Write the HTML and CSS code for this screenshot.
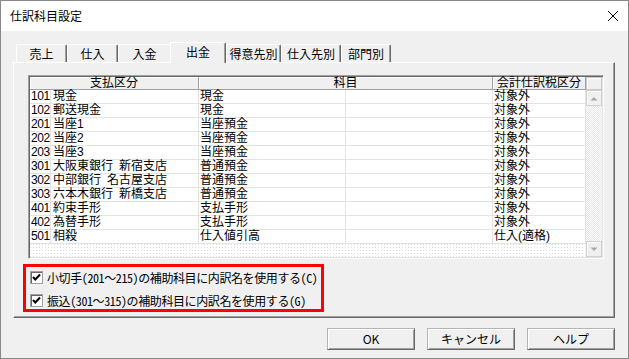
FILE: index.html
```html
<!DOCTYPE html>
<html lang="ja">
<head>
<meta charset="utf-8">
<title>仕訳科目設定</title>
<link rel="stylesheet" href="styles.css">
</head>
<body>
<div class="window">
  <div class="titlebar">
    <span class="title">仕訳科目設定</span>
    <svg class="close" width="10" height="10" viewBox="0 0 10 10"><path d="M0 0L10 10M10 0L0 10" stroke="#000" stroke-width="1" fill="none"/></svg>
  </div>
  <div class="content">
    <div class="tabs">
      <div class="tab tab-a">売上</div>
      <div class="tab tab-b">仕入</div>
      <div class="tab tab-c pre">入金</div>
      <div class="tab tab-d active">出金</div>
      <div class="tab tab-e">得意先別</div>
      <div class="tab tab-f">仕入先別</div>
      <div class="tab tab-g">部門別</div>
    </div>
    <div class="panel">
      <div class="grid">
        <div class="ghead">
          <div class="hc hc-a">支払区分</div>
          <div class="hc hc-b">科目</div>
          <div class="hc hc-c">会計仕訳税区分</div>
          <div class="hc hc-corner"></div>
        </div>
        <div class="gbody">
          <div class="rows">
            <div class="row"><span class="cell code">101</span><span class="cell name">現金</span><span class="cell subj">現金</span><span class="cell blank"></span><span class="cell tax">対象外</span></div>
            <div class="row"><span class="cell code">102</span><span class="cell name">郵送現金</span><span class="cell subj">現金</span><span class="cell blank"></span><span class="cell tax">対象外</span></div>
            <div class="row"><span class="cell code">201</span><span class="cell name">当座1</span><span class="cell subj">当座預金</span><span class="cell blank"></span><span class="cell tax">対象外</span></div>
            <div class="row"><span class="cell code">202</span><span class="cell name">当座2</span><span class="cell subj">当座預金</span><span class="cell blank"></span><span class="cell tax">対象外</span></div>
            <div class="row"><span class="cell code">203</span><span class="cell name">当座3</span><span class="cell subj">当座預金</span><span class="cell blank"></span><span class="cell tax">対象外</span></div>
            <div class="row"><span class="cell code">301</span><span class="cell name">大阪東銀行&ensp;新宿支店</span><span class="cell subj">普通預金</span><span class="cell blank"></span><span class="cell tax">対象外</span></div>
            <div class="row"><span class="cell code">302</span><span class="cell name">中部銀行&ensp;名古屋支店</span><span class="cell subj">普通預金</span><span class="cell blank"></span><span class="cell tax">対象外</span></div>
            <div class="row"><span class="cell code">303</span><span class="cell name">六本木銀行&ensp;新橋支店</span><span class="cell subj">普通預金</span><span class="cell blank"></span><span class="cell tax">対象外</span></div>
            <div class="row"><span class="cell code">401</span><span class="cell name">約束手形</span><span class="cell subj">支払手形</span><span class="cell blank"></span><span class="cell tax">対象外</span></div>
            <div class="row"><span class="cell code">402</span><span class="cell name">為替手形</span><span class="cell subj">支払手形</span><span class="cell blank"></span><span class="cell tax">対象外</span></div>
            <div class="row"><span class="cell code">501</span><span class="cell name">相殺</span><span class="cell subj">仕入値引高</span><span class="cell blank"></span><span class="cell tax">仕入(適格)</span></div>
            <div class="filler"></div>
          </div>
          <div class="vscroll">
            <div class="sbtn"><svg width="8" height="5" viewBox="0 0 8 5"><polygon points="0.5,4.5 4,1 7.5,4.5" fill="#a8a8a8"/></svg></div>
            <div class="track"></div>
            <div class="sbtn"><svg width="8" height="5" viewBox="0 0 8 5"><polygon points="0.5,0.5 4,4 7.5,0.5" fill="#a8a8a8"/></svg></div>
          </div>
        </div>
      </div>
      <div class="opts">
        <div class="opt"><span class="cb"><svg width="11" height="11" viewBox="0 0 11 11"><path d="M2 5L4.3 7.5L9 2.5" stroke="#000" stroke-width="2" fill="none"/></svg></span><span class="opt-label">小切手(201～215)の補助科目に内訳名を使用する(C)</span></div>
        <div class="opt"><span class="cb"><svg width="11" height="11" viewBox="0 0 11 11"><path d="M2 5L4.3 7.5L9 2.5" stroke="#000" stroke-width="2" fill="none"/></svg></span><span class="opt-label">振込(301～315)の補助科目に内訳名を使用する(G)</span></div>
      </div>
    </div>
    <div class="buttons">
      <button class="btn">OK</button>
      <button class="btn">キャンセル</button>
      <button class="btn">ヘルプ</button>
    </div>
  </div>
</div>
</body>
</html>
```
FILE: styles.css
```css
* { box-sizing: border-box; }
html, body { margin: 0; padding: 0; }
body {
  font-family: "Noto Sans Mono CJK JP", "Noto Sans CJK JP", sans-serif;
  font-size: 12px;
  color: #000;
  background: #f0f0f0;
}
.window {
  width: 629px;
  height: 359px;
  border: 1px solid #888;
  background: #f0f0f0;
  display: flex;
  flex-direction: column;
  overflow: hidden;
}
.titlebar {
  height: 30px;
  flex: none;
  background: #fff;
  display: flex;
  align-items: center;
  justify-content: space-between;
  padding: 0 10px 0 9px;
}
.title { font-family: "Noto Sans CJK JP", sans-serif; font-size: 12px; line-height: 14px; }
.close { display: block; }

.content {
  padding: 11px 13px 0 12px;
  display: flex;
  flex-direction: column;
}

/* tabs */
.tabs {
  display: flex;
  align-items: flex-end;
  height: 20px;
  padding-left: 3px;
}
.tab {
  height: 18px;
  border-top: 1px solid #fff;
  border-left: 1px solid #fff;
  border-right: 1px solid #696969;
  box-shadow: inset -1px 0 0 #a0a0a0;
  border-top-right-radius: 2px;
  display: flex;
  align-items: center;
  justify-content: center;
  line-height: 14px;
  white-space: nowrap;
}
.tab.pre { border-right: 0; box-shadow: none; }
.tab.active {
  height: 21px;
  margin-bottom: -1px;
  padding-bottom: 3px;
  background: #f0f0f0;
  position: relative;
  z-index: 1;
}
.tab-a { width: 51px; }
.tab-b { width: 51px; }
.tab-c { width: 52px; }
.tab-d { width: 56px; }
.tab-e { width: 55px; }
.tab-f { width: 60px; }
.tab-g { width: 50px; }

/* panel */
.panel {
  height: 256px;
  border-top: 1px solid #fff;
  border-left: 1px solid #fff;
  border-right: 1px solid #696969;
  border-bottom: 1px solid #696969;
  box-shadow: inset -1px -1px 0 #a0a0a0;
  padding: 12px 0 0 14px;
}

/* grid */
.grid {
  width: 576px;
  height: 184px;
  border-top: 1px solid #a0a0a0;
  border-left: 1px solid #a0a0a0;
  border-right: 1px solid #fff;
  border-bottom: 1px solid #fff;
  box-shadow: inset 1px 1px 0 #696969, inset -1px -1px 0 #e3e3e3;
  padding: 1px;
  background: #fff;
  display: flex;
  flex-direction: column;
  font-family: "Liberation Sans", "Noto Sans Mono CJK JP", "Noto Sans CJK JP", sans-serif;
}
.ghead { display: flex; height: 13px; flex: none; }
.hc {
  background: #f0f0f0;
  border-right: 1px solid #a0a0a0;
  border-bottom: 1px solid #a0a0a0;
  box-shadow: inset 1px 1px 0 #fff;
  text-align: center;
  line-height: 12px;
  white-space: nowrap;
}
.hc-a { width: 169px; }
.hc-b { width: 294px; }
.hc-c { width: 93px; }
.hc-corner {
  width: 16px;
  border: 1px solid #c8c8c8;
  background: #f0f0f0;
}

.gbody { display: flex; flex: 1; min-height: 0; }
.rows { width: 556px; display: flex; flex-direction: column; }
.row {
  display: flex;
  height: 14px;
  flex: none;
  border-bottom: 1px solid #e3e3e3;
  line-height: 13px;
}
.cell {
  border-right: 1px solid #e3e3e3;
  white-space: pre;
}
.code { width: 21px; padding-left: 1px; letter-spacing: -0.4px; }
.name { width: 148px; padding-left: 2px; }
.subj { width: 147px; padding-left: 1px; }
.blank { width: 147px; }
.tax { width: 93px; padding-left: 1px; }
.filler {
  flex: 1;
  background-color: #fff;
  background-image:
    linear-gradient(to bottom, transparent 1px, #fff 1px),
    linear-gradient(to right, #dedede 1px, #fff 1px);
  background-size: 3px 3px, 3px 3px;
  border-right: 1px solid #f4f4f4;
}

.vscroll {
  width: 16px;
  display: flex;
  flex-direction: column;
}
.sbtn {
  width: 16px;
  height: 16px;
  flex: none;
  background: #f0f0f0;
  border: 1px solid #d0d0d0;
  box-shadow: inset 1px 1px 0 #fafafa;
  display: flex;
  align-items: center;
  justify-content: center;
}
.sbtn svg { display: block; }
.track {
  flex: 1;
  background: repeating-conic-gradient(#e6e6e6 0 25%, #fff 0 50%) 0 0 / 2px 2px;
}

/* options */
.opts {
  width: 301px;
  height: 48px;
  margin: 5px 0 0 -5px;
  border: 3px solid #ff0000;
  padding: 4px 0 0 4px;
  display: flex;
  flex-direction: column;
  gap: 10px;
}
.opt {
  display: flex;
  align-items: center;
  gap: 4px;
  height: 13px;
  line-height: 13px;
  white-space: nowrap;
}
.opt-label { letter-spacing: -0.4px; }
.cb {
  width: 13px;
  height: 13px;
  flex: none;
  background: #fff;
  border: 1px solid #a0a0a0;
  box-shadow: inset 1px 1px 0 #696969;
  display: flex;
  align-items: center;
  justify-content: center;
}
.cb svg { display: block; }

/* buttons */
.buttons {
  display: flex;
  justify-content: flex-end;
  gap: 12px;
  margin-top: 10px;
}
.btn {
  width: 88px;
  height: 22px;
  padding: 0;
  border: 1px solid;
  border-color: #b4b4b4 #696969 #696969 #b4b4b4;
  box-shadow: inset 1px 1px 0 #fff, inset -1px -1px 0 #a0a0a0;
  background: #f0f0f0;
  font-family: "Noto Sans CJK JP", sans-serif;
  font-size: 12px;
  line-height: 18px;
  color: #000;
}
```
